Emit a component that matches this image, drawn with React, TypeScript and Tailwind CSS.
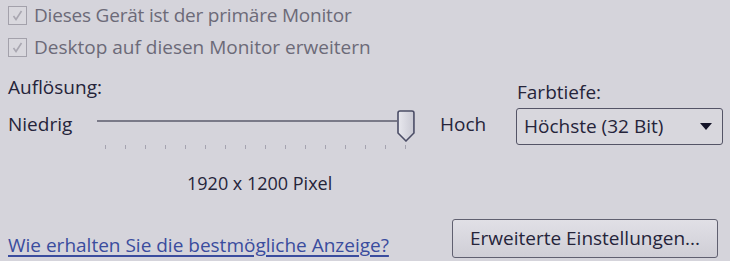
import React from "react";

function Check() {
  return (
    <div className="w-[19px] h-[19px] border border-[#a3a1ab] bg-[#d9d8de] flex items-center justify-center">
      <svg width="13" height="13" viewBox="0 0 13 13">
        <path d="M2.5 7 L5 10.5 L10.5 2" fill="none" stroke="#a9a7b1" strokeWidth="1.6" />
      </svg>
    </div>
  );
}

function Thumb() {
  return (
    <svg width="18" height="32" viewBox="0 0 18 32">
      <defs>
        <linearGradient id="tg" x1="0" x2="1" y1="0" y2="0">
          <stop offset="0" stopColor="#e8e8ee" />
          <stop offset="1" stopColor="#c9c9d3" />
        </linearGradient>
      </defs>
      <path d="M3 1 H15 Q17 1 17 3 V23 L9 31 L1 23 V3 Q1 1 3 1 Z" fill="url(#tg)" stroke="#4b4d66" strokeWidth="1.6" />
    </svg>
  );
}

export default function App() {
  const ticks = Array.from({ length: 16 }, (_, i) => i);
  return (
    <div
      className="w-[730px] h-[261px] bg-[#d5d4db] overflow-hidden text-[#25243a] text-[19px] leading-none"
      style={{ fontFamily: '"Open Sans", "Noto Sans", sans-serif' }}
    >
      <div className="pl-[8px] pt-[6px] flex flex-col gap-[13px] text-[#6c6a78]">
        <div className="flex items-center gap-[7px] h-[19px]">
          <Check />
          <span className="tracking-[-0.2px]">Dieses Gerät ist der primäre Monitor</span>
        </div>
        <div className="flex items-center gap-[7px] h-[19px]">
          <Check />
          <span>Desktop auf diesen Monitor erweitern</span>
        </div>
      </div>

      <div className="flex mt-[21px] h-[133px]">
        <div className="w-[508px] pl-[8px] flex flex-col">
          <div className="h-[20px]">Auflösung:</div>
          <div className="flex items-start mt-[12px]">
            <div className="w-[89px] pt-[5px]">Niedrig</div>
            <div className="w-[318px] flex flex-col">
              <div className="flex items-start h-[32px]">
                <div className="w-[301px] h-[2px] bg-[#7a7a88] mt-[10px]" />
                <Thumb />
              </div>
              <div className="flex h-[6px] mt-[3px] pl-[8px]">
                {ticks.map((i) => (
                  <div key={i} className="w-[20px] shrink-0">
                    <div className="w-[1px] h-[4px] bg-[#a5a3b0]" />
                  </div>
                ))}
              </div>
            </div>
            <div className="pl-[25px] pt-[5px]">Hoch</div>
          </div>
          <div className="mt-[23px] pl-[179px] text-[18px]">1920 x 1200 Pixel</div>
        </div>
        <div className="flex flex-col pt-[5px] pl-[8px]">
          <div className="h-[20px] pl-[1px]">Farbtiefe:</div>
          <div className="mt-[5px] w-[207px] h-[37px] border border-[#545466] rounded-[3px] bg-[#d8d7dd] flex items-center justify-between pl-[7px] pr-[10px]">
            <span>Höchste (32 Bit)</span>
            <svg width="12" height="7" viewBox="0 0 12 7">
              <path d="M0 0 H12 L6 7 Z" fill="#141428" />
            </svg>
          </div>
        </div>
      </div>

      <div className="flex items-center justify-between pl-[8px] pr-[12px] mt-[8px]">
        <a className="text-[#3a4c9e] underline underline-offset-[3px] decoration-[1.5px] pt-[14px]">
          Wie erhalten Sie die bestmögliche Anzeige?
        </a>
        <div className="w-[266px] h-[39px] border border-[#606070] rounded-[3px] bg-gradient-to-b from-[#e1e0e6] to-[#cfced6] flex items-center justify-center">
          Erweiterte Einstellungen...
        </div>
      </div>
    </div>
  );
}
